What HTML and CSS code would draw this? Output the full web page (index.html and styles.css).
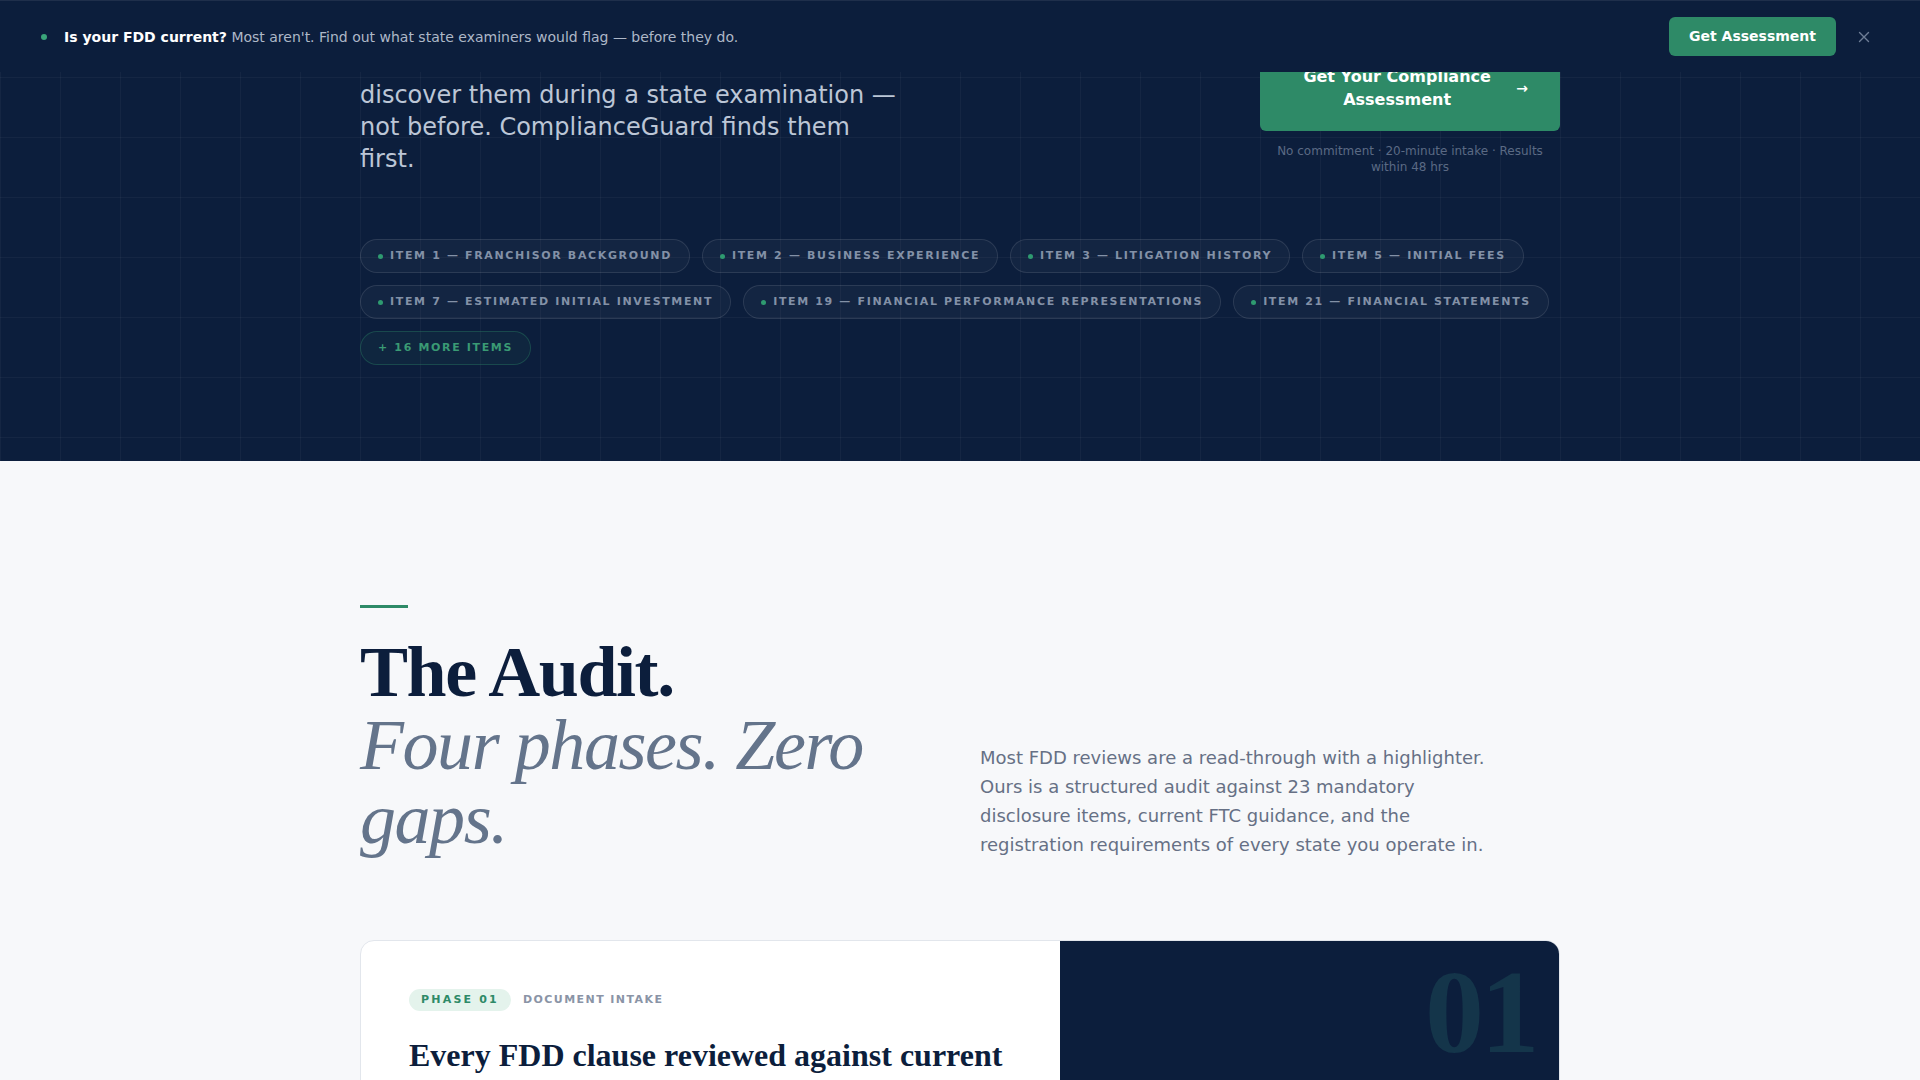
FILE: index.html
```html
<!DOCTYPE html>
<html lang="en">
<head>
<meta charset="utf-8">
<title>ComplianceGuard — FDD Compliance Audit</title>
<link rel="stylesheet" href="styles.css">
</head>
<body>
<div class="announce">
  <div class="announce-msg">
    <span class="announce-dot"></span>
    <p><strong>Is your FDD current?</strong> Most aren't. Find out what state examiners would flag — before they do.</p>
  </div>
  <div class="announce-actions">
    <a class="announce-btn" href="#">Get Assessment</a>
    <button class="announce-close" type="button" aria-label="Close">
      <svg width="12" height="12" viewBox="0 0 12 12"><path d="M1.5 1.5 L10.5 10.5 M10.5 1.5 L1.5 10.5" stroke="#6e7d96" stroke-width="1.4" stroke-linecap="round" fill="none"/></svg>
    </button>
  </div>
</div>

<section class="hero">
  <div class="container">
    <div class="hero-grid">
      <p class="hero-lede">discover them during a state examination — not before. ComplianceGuard finds them first.</p>
      <div class="hero-cta">
        <a class="cta-btn" href="#"><span class="cta-label">Get Your Compliance Assessment</span><span class="cta-arrow">→</span></a>
        <p class="cta-note">No commitment · 20-minute intake · Results within 48 hrs</p>
      </div>
    </div>
    <ul class="chips">
      <li class="chip"><span class="chip-dot"></span>Item 1 — Franchisor Background</li>
      <li class="chip"><span class="chip-dot"></span>Item 2 — Business Experience</li>
      <li class="chip"><span class="chip-dot"></span>Item 3 — Litigation History</li>
      <li class="chip"><span class="chip-dot"></span>Item 5 — Initial Fees</li>
      <li class="chip"><span class="chip-dot"></span>Item 7 — Estimated Initial Investment</li>
      <li class="chip"><span class="chip-dot"></span>Item 19 — Financial Performance Representations</li>
      <li class="chip"><span class="chip-dot"></span>Item 21 — Financial Statements</li>
      <li class="chip chip-more">+ 16 more items</li>
    </ul>
  </div>
</section>

<section class="audit">
  <div class="container">
    <div class="audit-head">
      <div class="audit-heading">
        <span class="rule"></span>
        <h2 class="audit-title">The Audit.<em>Four phases. Zero gaps.</em></h2>
      </div>
      <p class="audit-intro">Most FDD reviews are a read-through with a highlighter. Ours is a structured audit against 23 mandatory disclosure items, current FTC guidance, and the registration requirements of every state you operate in.</p>
    </div>

    <article class="phase-card">
      <div class="phase-body">
        <div class="phase-meta">
          <span class="phase-tag">Phase 01</span>
          <span class="phase-label">Document Intake</span>
        </div>
        <h3 class="phase-title">Every FDD clause reviewed against current FTC rules and state requirements.</h3>
        <p class="phase-text">We collect your current disclosure document, exhibits and state filings, and map every item to the applicable rule.</p>
      </div>
      <div class="phase-visual">
        <span class="phase-num">01</span>
      </div>
    </article>
  </div>
</section>
</body>
</html>
```

FILE: styles.css
```css
* { box-sizing: border-box; }

html, body { margin: 0; padding: 0; }

body {
  font-family: "DejaVu Sans", "Noto Sans", sans-serif;
  background: #f7f8fa;
  color: #0c1e3c;
}

a { text-decoration: none; }

.container {
  max-width: 1200px;
  margin: 0 auto;
}

/* Announcement bar */
.announce {
  position: fixed;
  top: 0;
  left: 0;
  right: 0;
  z-index: 10;
  height: 72px;
  display: flex;
  align-items: center;
  justify-content: space-between;
  padding: 0 50px 0 41px;
  background: #0c1e3c;
  border-top: 1px solid rgba(255, 255, 255, 0.08);
}

.announce-msg {
  display: flex;
  align-items: center;
  gap: 17px;
}

.announce-dot {
  width: 6px;
  height: 6px;
  border-radius: 50%;
  background: #3aa57a;
}

.announce-msg p {
  margin: 0;
  font-size: 14px;
  color: #aeb8c8;
}

.announce-msg strong {
  color: #ffffff;
  font-weight: 700;
}

.announce-actions {
  display: flex;
  align-items: center;
  gap: 22px;
}

.announce-btn {
  display: inline-block;
  padding: 11px 20px;
  border-radius: 6px;
  background: #2e8a67;
  color: #ffffff;
  font-size: 14px;
  line-height: 17px;
  font-weight: 700;
}

.announce-close {
  display: flex;
  padding: 0;
  border: 0;
  background: none;
}

/* Hero */
.hero {
  padding: 45px 0 96px;
  background-color: #0c1e3c;
  background-image:
    linear-gradient(to right, rgba(255, 255, 255, 0.035) 1px, transparent 1px),
    linear-gradient(to bottom, rgba(255, 255, 255, 0.035) 1px, transparent 1px);
  background-size: 60px 60px;
  background-position: 0 17px;
}

.hero-grid {
  display: grid;
  grid-template-columns: 1fr 300px;
  gap: 40px;
  align-items: end;
}

.hero-lede {
  margin: 0;
  max-width: 540px;
  font-size: 24px;
  line-height: 32px;
  color: #bcc6d6;
}

.hero-cta {
  display: flex;
  flex-direction: column;
  gap: 12px;
}

.cta-btn {
  display: flex;
  align-items: center;
  gap: 12px;
  padding: 20px 32px 20px 30px;
  border-radius: 6px;
  background: #2e8a67;
  color: #ffffff;
  font-size: 16px;
  line-height: 23px;
  font-weight: 700;
}

.cta-label {
  flex: 1;
  text-align: center;
}

.cta-arrow {
  font-size: 14px;
}

.cta-note {
  margin: 0;
  font-size: 12px;
  line-height: 16px;
  text-align: center;
  color: #5b6a84;
}

.chips {
  display: flex;
  flex-wrap: wrap;
  gap: 12px;
  margin: 64px 0 0;
  padding: 0;
  list-style: none;
}

.chip {
  display: inline-flex;
  align-items: center;
  gap: 7px;
  padding: 9px 17px;
  border: 1px solid rgba(255, 255, 255, 0.1);
  border-radius: 999px;
  background: rgba(255, 255, 255, 0.03);
  color: #8391a7;
  font-size: 11px;
  line-height: 14px;
  font-weight: 700;
  letter-spacing: 0.15em;
  text-transform: uppercase;
}

.chip-dot {
  width: 5px;
  height: 5px;
  border-radius: 50%;
  background: #2e9a70;
}

.chip-more {
  color: #3a9a74;
  border-color: rgba(46, 138, 103, 0.35);
  background: rgba(46, 138, 103, 0.08);
}

/* Audit section */
.audit {
  padding: 144px 0 120px;
}

.audit-head {
  display: grid;
  grid-template-columns: 1fr 1fr;
  gap: 40px;
  align-items: end;
}

.rule {
  display: block;
  width: 48px;
  height: 3px;
  margin-bottom: 28px;
  background: #2e8a67;
}

.audit-title {
  margin: 0;
  font-family: "Liberation Serif", "Times New Roman", serif;
  font-size: 72px;
  line-height: 1.02;
  font-weight: 700;
  letter-spacing: -0.02em;
  color: #0c1e3c;
}

.audit-title em {
  display: block;
  font-weight: 400;
  font-style: italic;
  color: #64748b;
}

.audit-intro {
  margin: 0 0 -3px;
  max-width: 520px;
  font-size: 18px;
  line-height: 1.6;
  color: #667085;
}

.phase-card {
  display: grid;
  grid-template-columns: 7fr 5fr;
  margin-top: 84px;
  border: 1px solid #e2e6ec;
  border-radius: 14px;
  overflow: hidden;
  background: #ffffff;
}

.phase-body {
  padding: 48px;
}

.phase-meta {
  display: flex;
  align-items: center;
  gap: 12px;
}

.phase-tag {
  padding: 4px 12px;
  border-radius: 999px;
  background: #e4f3ec;
  color: #2e8a67;
  font-size: 11px;
  line-height: 14px;
  font-weight: 700;
  letter-spacing: 0.2em;
  text-transform: uppercase;
}

.phase-label {
  color: #8a94a6;
  font-size: 11px;
  line-height: 14px;
  font-weight: 700;
  letter-spacing: 0.13em;
  text-transform: uppercase;
}

.phase-title {
  margin: 24px 0 16px;
  font-family: "Liberation Serif", "Times New Roman", serif;
  font-size: 32px;
  line-height: 1.25;
  font-weight: 700;
  color: #0c1e3c;
}

.phase-text {
  margin: 0;
  font-size: 16px;
  line-height: 1.6;
  color: #667085;
}

.phase-visual {
  display: flex;
  justify-content: flex-end;
  align-items: flex-start;
  padding: 13px 23px 40px;
  background: #0c1e3c;
}

.phase-num {
  font-family: "Liberation Serif", "Times New Roman", serif;
  font-size: 118px;
  line-height: 1;
  font-weight: 700;
  letter-spacing: -0.03em;
  color: #14354a;
}
```
